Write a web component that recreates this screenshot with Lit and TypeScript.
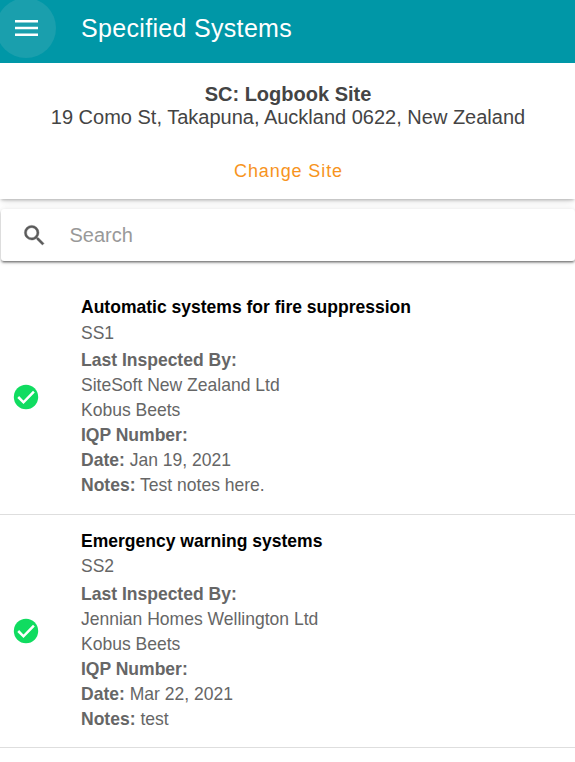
import { LitElement, html, css } from "lit";
import { customElement } from "lit/decorators.js";

interface System {
  name: string;
  code: string;
  company: string;
  person: string;
  date: string;
  notes: string;
}

const systems: System[] = [
  { name: "Automatic systems for fire suppression", code: "SS1", company: "SiteSoft New Zealand Ltd", person: "Kobus Beets", date: "Jan 19, 2021", notes: "Test notes here." },
  { name: "Emergency warning systems", code: "SS2", company: "Jennian Homes Wellington Ltd", person: "Kobus Beets", date: "Mar 22, 2021", notes: "test" },
];

@customElement("app-root")
export class AppRoot extends LitElement {
  static styles = css`
    * { box-sizing: border-box; }
    :host { display: block; height: 762px; overflow: hidden; background: #fff; font-family: "Liberation Sans", Arial, sans-serif; color: #666; }
    header { height: 63px; background: #0097a7; display: flex; overflow: hidden; color: #fff; }
    .menu { width: 60px; height: 60px; margin: -2px 0 0 -4px; border-radius: 50%; background: #1a9fad; display: flex; align-items: center; justify-content: center; flex: none; }
    .menu svg { width: 23px; height: 16px; display: block; }
    h1 { margin: 0 0 0 25px; font-size: 25px; line-height: 57px; font-weight: 400; letter-spacing: .32px; white-space: nowrap; }
    .site { height: 136px; padding: 20px 0 0 1px; text-align: center; font-size: 20px; line-height: 23px; color: #444; box-shadow: 0 2px 3px -1px rgba(0,0,0,.26), 0 5px 8px -2px rgba(0,0,0,.1); white-space: nowrap; }
    .site b { display: block; }
    .change { font-size: 18px; letter-spacing: .9px; color: #f7941d; margin-top: 31px; padding-left: 1px; line-height: 22px; }
    .search { height: 52px; margin: 10px 0 0 1px; border-radius: 3px; background: #fff; display: flex; align-items: center; box-shadow: 0 3px 1px -2px rgba(0,0,0,.2), 0 2px 2px rgba(0,0,0,.28), 0 1px 5px rgba(0,0,0,.16); color: #999; font-size: 20px; }
    .search svg { width: 27px; height: 27px; margin: 1px 22px 0 19.5px; fill: #5b5b5b; stroke: #5b5b5b; stroke-width: .35; }
    .list { padding-top: 19px; }
    .item { height: 233px; display: flex; border-bottom: 1px solid #dedede; }
    .item:first-child { height: 235px; }
    .item > svg { width: 30px; height: 30px; margin: 101px 40px 0 11px; flex: none; }
    .item:first-child > svg { margin-top: 102px; }
    .body { padding-top: 13px; font-size: 17.52px; line-height: 25px; white-space: nowrap; }
    .item:first-child .body { padding-top: 14px; }
    h2 { margin: 0; font-size: 17.52px; line-height: 26px; color: #000; }
    .code { line-height: 26px; margin-bottom: 2px; }
    .item + .item .code { line-height: 25px; margin-bottom: 3px; }
    p { margin: 0; }
  `;

  render() {
    return html`
      <header>
        <div class="menu"><svg viewBox="0 0 23 16" fill="#fff"><path d="M0 0h23v2.5H0zM0 6.8h23v2.4H0zM0 13.5h23V16H0z"/></svg></div>
        <h1>Specified Systems</h1>
      </header>
      <section class="site">
        <b>SC: Logbook Site</b>
        <div>19 Como St, Takapuna, Auckland 0622, New Zealand</div>
        <div class="change">Change Site</div>
      </section>
      <div class="search">
        <svg viewBox="0 0 24 24"><path d="M15.5 14h-.79l-.28-.27A6.47 6.47 0 0 0 16 9.5 6.5 6.5 0 1 0 9.5 16c1.61 0 3.09-.59 4.23-1.57l.27.28v.79l5 4.99L20.49 19l-4.99-5zm-6 0C7.01 14 5 11.99 5 9.5S7.01 5 9.5 5 14 7.01 14 9.5 11.99 14 9.5 14z"/></svg>
        <span>Search</span>
      </div>
      <main class="list">
        ${systems.map((s) => html`
          <article class="item">
            <svg viewBox="0 0 30 30"><circle cx="15" cy="15" r="12.2" fill="#10dc60"/><path d="M7.2 15l5.3 5.3L22.9 9.6" fill="none" stroke="#fff" stroke-width="2.5"/></svg>
            <div class="body">
              <h2>${s.name}</h2>
              <p class="code">${s.code}</p>
              <p><b>Last Inspected By:</b></p>
              <p>${s.company}</p>
              <p>${s.person}</p>
              <p><b>IQP Number:</b></p>
              <p><b>Date:</b> ${s.date}</p>
              <p><b>Notes:</b> ${s.notes}</p>
            </div>
          </article>`)}
      </main>`;
  }
}
